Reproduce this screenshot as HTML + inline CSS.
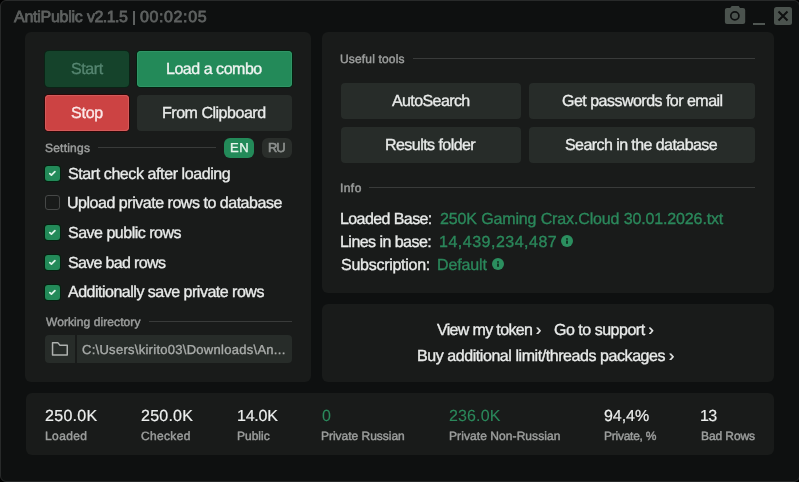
<!DOCTYPE html>
<html><head><meta charset="utf-8"><style>
html,body{margin:0;padding:0;background:#000;width:799px;height:482px;overflow:hidden}
body{position:relative;font-family:"Liberation Sans",sans-serif;-webkit-font-smoothing:antialiased}
.t{will-change:transform;-webkit-text-stroke:0.35px currentColor}
.win{position:absolute;left:0;top:0;width:798px;height:480px;border:1px solid #282a2a;border-radius:6px;background:#0e1010}
.p{position:absolute;background:#191b1a;border-radius:6px}
.b{position:absolute;border-radius:4px}
.t{position:absolute;white-space:pre;line-height:normal;text-rendering:geometricPrecision}
.ln{position:absolute;height:1px;background:#393b3a}
.cb{position:absolute;width:15px;height:15px;border-radius:3px;box-sizing:border-box}
.on{background:#238a59;box-shadow:0 0 0 1px #04200f}
.off{border:1.3px solid #464847}
</style></head><body>
<div class="win"></div>
<!-- panels -->
<div class="p" style="left:25px;top:32px;width:286px;height:350px"></div>
<div class="p" style="left:322px;top:32px;width:452px;height:261px"></div>
<div class="p" style="left:322px;top:304px;width:452px;height:78px"></div>
<div class="p" style="left:26px;top:393px;width:748px;height:62px"></div>
<!-- buttons -->
<div class="b" style="left:45px;top:51px;width:84px;height:36px;background:#15432b;box-shadow:0 0 0 1px #0b2316"></div>
<div class="b" style="left:137px;top:51px;width:155px;height:36px;background:#238a59;box-shadow:0 0 0 1px #04200f,inset 0 0 0 1px #2f9566"></div>
<div class="b" style="left:45px;top:95px;width:84px;height:36px;background:#cc4343;box-shadow:0 0 0 1px #2e0707,inset 0 0 0 1px #d45a5a"></div>
<div class="b" style="left:137px;top:95px;width:155px;height:36px;background:#272c29"></div>
<div class="b" style="left:224px;top:138px;width:30px;height:20px;border-radius:6px;background:#238a59"></div>
<div class="b" style="left:262px;top:138px;width:30px;height:20px;border-radius:6px;background:#2a2e2b"></div>
<div class="ln" style="left:98px;top:147px;width:118px"></div>
<div class="ln" style="left:149px;top:321px;width:143px"></div>
<div class="ln" style="left:413px;top:58px;width:342px"></div>
<div class="ln" style="left:369px;top:187px;width:386px"></div>
<!-- checkboxes -->
<div class="cb on" style="left:45px;top:166px"><svg width="15" height="15" style="position:absolute;left:0;top:0"><path d="M4.8 7.6 L6.4 9.1 L9.9 5.7" fill="none" stroke="#dff3e8" stroke-width="1.8" stroke-linecap="round" stroke-linejoin="round"/></svg></div>
<div class="cb off" style="left:45px;top:195px"></div>
<div class="cb on" style="left:45px;top:225px"><svg width="15" height="15" style="position:absolute;left:0;top:0"><path d="M4.8 7.6 L6.4 9.1 L9.9 5.7" fill="none" stroke="#dff3e8" stroke-width="1.8" stroke-linecap="round" stroke-linejoin="round"/></svg></div>
<div class="cb on" style="left:45px;top:255px"><svg width="15" height="15" style="position:absolute;left:0;top:0"><path d="M4.8 7.6 L6.4 9.1 L9.9 5.7" fill="none" stroke="#dff3e8" stroke-width="1.8" stroke-linecap="round" stroke-linejoin="round"/></svg></div>
<div class="cb on" style="left:45px;top:285px"><svg width="15" height="15" style="position:absolute;left:0;top:0"><path d="M4.8 7.6 L6.4 9.1 L9.9 5.7" fill="none" stroke="#dff3e8" stroke-width="1.8" stroke-linecap="round" stroke-linejoin="round"/></svg></div>
<!-- path input -->
<div class="b" style="left:45px;top:335px;width:30px;height:28px;border-radius:4px 0 0 4px;background:#272c29"></div>
<div class="b" style="left:77px;top:335px;width:215px;height:28px;border-radius:0 4px 4px 0;background:#272c29"></div>
<!-- tools buttons -->
<div class="b" style="left:341px;top:83px;width:180px;height:36px;background:#272c29"></div>
<div class="b" style="left:529px;top:83px;width:226px;height:36px;background:#272c29"></div>
<div class="b" style="left:341px;top:127px;width:180px;height:36px;background:#272c29"></div>
<div class="b" style="left:529px;top:127px;width:226px;height:36px;background:#272c29"></div>
<!-- icons -->
<svg style="position:absolute;left:44px;top:334px" width="32" height="30"><path d="M8.55 8.85 H14 L16 11.35 H23.25 V21.05 H8.55 Z" fill="none" stroke="#aeb1af" stroke-width="1.5" stroke-linejoin="round"/></svg>
<svg style="position:absolute;left:555px;top:229px" width="24" height="24"><circle cx="12" cy="12" r="6" fill="#2b8f5f"/><circle cx="12" cy="10" r="0.9" fill="#0e2a1b"/><rect x="11.15" y="11.5" width="1.7" height="3.3" fill="#0e2a1b"/></svg>
<svg style="position:absolute;left:486px;top:251.8px" width="24" height="24"><circle cx="12" cy="12" r="6" fill="#2b8f5f"/><circle cx="12" cy="10" r="0.9" fill="#0e2a1b"/><rect x="11.15" y="11.5" width="1.7" height="3.3" fill="#0e2a1b"/></svg>
<svg style="position:absolute;left:720px;top:0px" width="79" height="32">
 <path d="M11.7 6 H18.7 L20 8 H23 Q25.2 8 25.2 10 V22 Q25.2 24 23 24 H7 Q4.9 24 4.9 22 V10 Q4.9 8 7 8 H10.2 Z" fill="#4b534e"/>
 <circle cx="14.85" cy="15.85" r="4.05" fill="none" stroke="#0e1010" stroke-width="1.7"/>
 <rect x="33" y="23" width="12" height="2" fill="#4f5652"/>
 <rect x="54" y="7" width="18" height="18" rx="2.5" fill="#4b534e"/>
 <path d="M58.5 11.5 L67.5 20.5 M67.5 11.5 L58.5 20.5" stroke="#0e1010" stroke-width="2"/>
</svg>
<div style="position:absolute;left:133.3px;top:11px;width:2px;height:13.5px;background:#5e6160"></div>
<div class="t" style="left:13.6px;top:9px;font-size:16px;font-weight:400;color:#5e6160;letter-spacing:-0.256px;-webkit-text-stroke-width:0.75px">AntiPublic</div>
<div class="t" style="left:87.4px;top:9px;font-size:16px;font-weight:400;color:#5e6160;letter-spacing:-0.540px;-webkit-text-stroke-width:0.75px">v2.1.5</div>
<div class="t" style="left:140.3px;top:9px;font-size:16px;font-weight:400;color:#5e6160;letter-spacing:0.607px;-webkit-text-stroke-width:0.75px">00:02:05</div>
<div class="t" style="left:70.7px;top:61px;font-size:16px;font-weight:400;color:#558570;letter-spacing:-0.412px;-webkit-text-stroke-width:0.35px">Start</div>
<div class="t" style="left:166.2px;top:61px;font-size:16px;font-weight:400;color:#eef3f0;letter-spacing:-0.468px;-webkit-text-stroke-width:0.35px">Load a combo</div>
<div class="t" style="left:70.8px;top:105px;font-size:16px;font-weight:400;color:#fbe9e9;letter-spacing:-0.217px;-webkit-text-stroke-width:0.35px">Stop</div>
<div class="t" style="left:162.4px;top:105px;font-size:16px;font-weight:400;color:#e9ebea;letter-spacing:-0.477px;-webkit-text-stroke-width:0.35px">From Clipboard</div>
<div class="t" style="left:44.8px;top:141px;font-size:12px;font-weight:400;color:#9c9e9d;letter-spacing:0.221px;-webkit-text-stroke-width:0.45px">Settings</div>
<div class="t" style="left:229.6px;top:140px;font-size:13px;font-weight:400;color:#e6f4eb;letter-spacing:0.600px;-webkit-text-stroke-width:0.35px">EN</div>
<div class="t" style="left:268.1px;top:140px;font-size:13px;font-weight:400;color:#8d918f;letter-spacing:-1.050px;-webkit-text-stroke-width:0.6px">RU</div>
<div class="t" style="left:67.5px;top:166px;font-size:16px;font-weight:400;color:#e9ebea;letter-spacing:-0.408px;-webkit-text-stroke-width:0.35px">Start check after loading</div>
<div class="t" style="left:67.0px;top:195px;font-size:16px;font-weight:400;color:#e9ebea;letter-spacing:-0.472px;-webkit-text-stroke-width:0.35px">Upload private rows to database</div>
<div class="t" style="left:67.5px;top:225px;font-size:16px;font-weight:400;color:#e9ebea;letter-spacing:-0.497px;-webkit-text-stroke-width:0.35px">Save public rows</div>
<div class="t" style="left:67.5px;top:255px;font-size:16px;font-weight:400;color:#e9ebea;letter-spacing:-0.663px;-webkit-text-stroke-width:0.35px">Save bad rows</div>
<div class="t" style="left:68.2px;top:284px;font-size:16px;font-weight:400;color:#e9ebea;letter-spacing:-0.495px;-webkit-text-stroke-width:0.35px">Additionally save private rows</div>
<div class="t" style="left:45.5px;top:315px;font-size:12px;font-weight:400;color:#9c9e9d;letter-spacing:0.078px;-webkit-text-stroke-width:0.45px">Working directory</div>
<div class="t" style="left:81.5px;top:342px;font-size:13px;font-weight:400;color:#a9acaa;letter-spacing:0.278px;-webkit-text-stroke-width:0.35px">C:\Users\kirito03\Downloads\An...</div>
<div class="t" style="left:340.2px;top:52px;font-size:12px;font-weight:400;color:#9c9e9d;letter-spacing:0.164px;-webkit-text-stroke-width:0.45px">Useful tools</div>
<div class="t" style="left:392.2px;top:93px;font-size:16px;font-weight:400;color:#e9ebea;letter-spacing:-0.600px;-webkit-text-stroke-width:0.35px">AutoSearch</div>
<div class="t" style="left:561.5px;top:93px;font-size:16px;font-weight:400;color:#e9ebea;letter-spacing:-0.516px;-webkit-text-stroke-width:0.35px">Get passwords for email</div>
<div class="t" style="left:385.3px;top:137px;font-size:16px;font-weight:400;color:#e9ebea;letter-spacing:-0.550px;-webkit-text-stroke-width:0.35px">Results folder</div>
<div class="t" style="left:565.4px;top:137px;font-size:16px;font-weight:400;color:#e9ebea;letter-spacing:-0.567px;-webkit-text-stroke-width:0.35px">Search in the database</div>
<div class="t" style="left:340.2px;top:181px;font-size:12px;font-weight:400;color:#9c9e9d;letter-spacing:0.433px;-webkit-text-stroke-width:0.45px">Info</div>
<div class="t" style="left:340.0px;top:211px;font-size:16px;font-weight:400;color:#e9ebea;letter-spacing:-0.586px;-webkit-text-stroke-width:0.35px">Loaded Base:</div>
<div class="t" style="left:440.2px;top:211px;font-size:16px;font-weight:400;color:#2b885b;letter-spacing:-0.135px;-webkit-text-stroke-width:0.35px">250K Gaming Crax.Cloud 30.01.2026.txt</div>
<div class="t" style="left:340.0px;top:234px;font-size:16px;font-weight:400;color:#e9ebea;letter-spacing:-0.538px;-webkit-text-stroke-width:0.35px">Lines in base:</div>
<div class="t" style="left:438.6px;top:234px;font-size:16px;font-weight:400;color:#2b885b;letter-spacing:0.504px;-webkit-text-stroke-width:0.35px">14,439,234,487</div>
<div class="t" style="left:340.5px;top:257px;font-size:16px;font-weight:400;color:#e9ebea;letter-spacing:-0.267px;-webkit-text-stroke-width:0.35px">Subscription:</div>
<div class="t" style="left:436.9px;top:257px;font-size:16px;font-weight:400;color:#2b885b;letter-spacing:-0.125px;-webkit-text-stroke-width:0.35px">Default</div>
<div class="t" style="left:436.6px;top:322px;font-size:16px;font-weight:400;color:#e9ebea;letter-spacing:-0.657px;-webkit-text-stroke-width:0.35px">View my token ›</div>
<div class="t" style="left:554.2px;top:322px;font-size:16px;font-weight:400;color:#e9ebea;letter-spacing:-0.489px;-webkit-text-stroke-width:0.35px">Go to support ›</div>
<div class="t" style="left:416.5px;top:348px;font-size:16px;font-weight:400;color:#e9ebea;letter-spacing:-0.434px;-webkit-text-stroke-width:0.35px">Buy additional limit/threads packages ›</div>
<div class="t" style="left:44.5px;top:408px;font-size:16px;font-weight:400;color:#eceeed;letter-spacing:0.300px;-webkit-text-stroke-width:0.2px">250.0K</div>
<div class="t" style="left:140.8px;top:408px;font-size:16px;font-weight:400;color:#eceeed;letter-spacing:0.240px;-webkit-text-stroke-width:0.2px">250.0K</div>
<div class="t" style="left:237.0px;top:408px;font-size:16px;font-weight:400;color:#eceeed;letter-spacing:-0.225px;-webkit-text-stroke-width:0.2px">14.0K</div>
<div class="t" style="left:322.3px;top:408px;font-size:16px;font-weight:400;color:#2b885b;letter-spacing:0.000px;-webkit-text-stroke-width:0.1px">0</div>
<div class="t" style="left:449.2px;top:408px;font-size:16px;font-weight:400;color:#2b885b;letter-spacing:0.140px;-webkit-text-stroke-width:0.1px">236.0K</div>
<div class="t" style="left:604.0px;top:408px;font-size:16px;font-weight:400;color:#eceeed;letter-spacing:-0.062px;-webkit-text-stroke-width:0.2px">94,4%</div>
<div class="t" style="left:700.3px;top:408px;font-size:16px;font-weight:400;color:#eceeed;letter-spacing:-0.750px;-webkit-text-stroke-width:0.2px">13</div>
<div class="t" style="left:44.5px;top:429px;font-size:12px;font-weight:400;color:#9c9e9d;letter-spacing:0.400px;-webkit-text-stroke-width:0.45px">Loaded</div>
<div class="t" style="left:141.1px;top:429px;font-size:12px;font-weight:400;color:#9c9e9d;letter-spacing:0.325px;-webkit-text-stroke-width:0.45px">Checked</div>
<div class="t" style="left:237.2px;top:429px;font-size:12px;font-weight:400;color:#9c9e9d;letter-spacing:0.000px;-webkit-text-stroke-width:0.45px">Public</div>
<div class="t" style="left:321.2px;top:429px;font-size:12px;font-weight:400;color:#9c9e9d;letter-spacing:-0.021px;-webkit-text-stroke-width:0.45px">Private Russian</div>
<div class="t" style="left:448.6px;top:429px;font-size:12px;font-weight:400;color:#9c9e9d;letter-spacing:0.078px;-webkit-text-stroke-width:0.45px">Private Non-Russian</div>
<div class="t" style="left:604.0px;top:429px;font-size:12px;font-weight:400;color:#9c9e9d;letter-spacing:-0.256px;-webkit-text-stroke-width:0.45px">Private, %</div>
<div class="t" style="left:700.5px;top:429px;font-size:12px;font-weight:400;color:#9c9e9d;letter-spacing:-0.086px;-webkit-text-stroke-width:0.45px">Bad Rows</div>
</body></html>
